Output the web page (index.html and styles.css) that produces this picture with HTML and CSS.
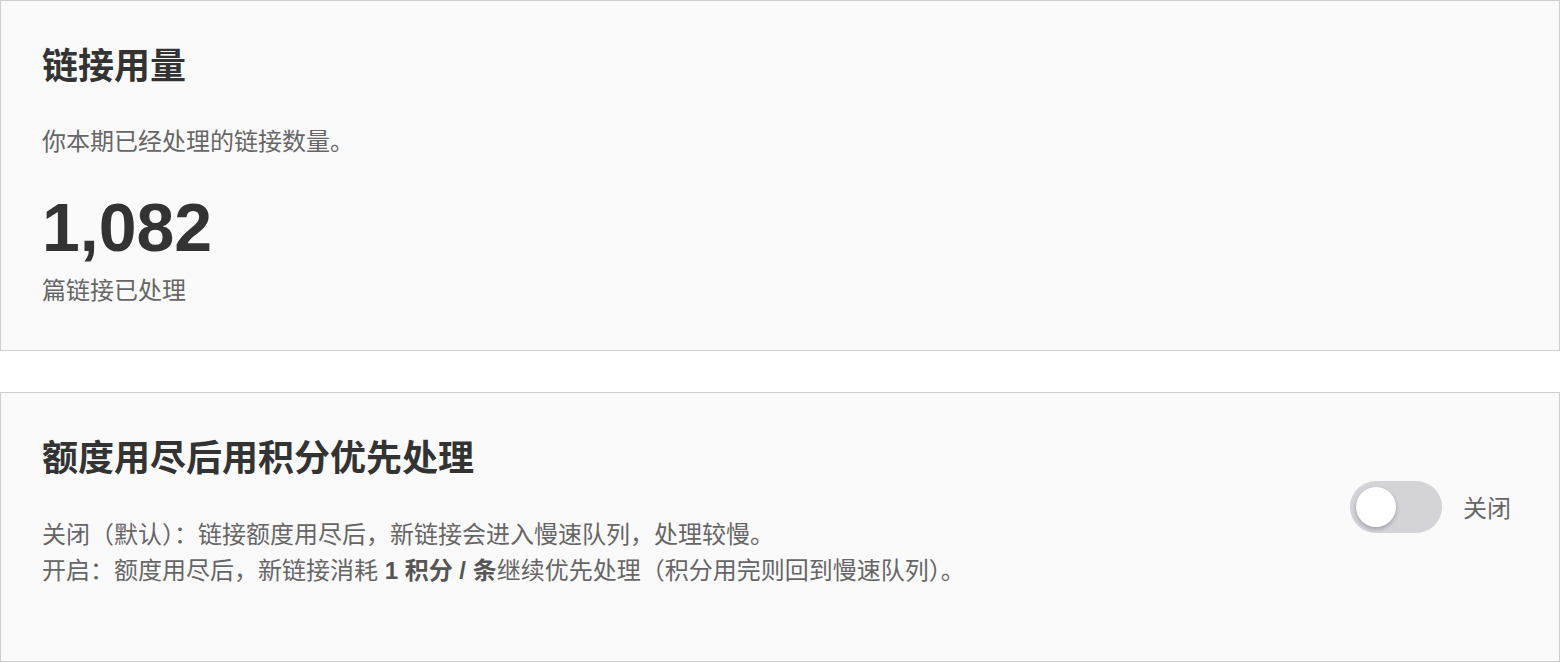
FILE: index.html
```html
<!DOCTYPE html>
<html lang="zh-CN">
<head>
    <meta charset="UTF-8">
    <meta name="viewport" content="width=device-width, initial-scale=1.0">
    <title>链接用量</title>
    <link rel="stylesheet" href="styles.css">
</head>
<body>
    <div class="card">
        <h2 class="card-title">链接用量</h2>
        <p class="card-desc">你本期已经处理的链接数量。</p>
        <div class="usage-number">1,082</div>
        <div class="usage-label">篇链接已处理</div>
    </div>

    <div class="card card-row">
        <div class="card-main">
            <h2 class="card-title">额度用尽后用积分优先处理</h2>
            <p class="card-desc">
                关闭（默认）：链接额度用尽后，新链接会进入慢速队列，处理较慢。<br>
                开启：额度用尽后，新链接消耗 <strong>1 积分 / 条</strong>继续优先处理（积分用完则回到慢速队列）。
            </p>
        </div>
        <label class="switch-wrap">
            <span class="switch">
                <span class="knob"></span>
            </span>
            <span class="switch-text">关闭</span>
        </label>
    </div>
</body>
</html>
```

FILE: styles.css
```css
body {
    font-family: "Liberation Sans", "Noto Sans CJK SC", sans-serif;
    margin: 0;
    padding: 0;
    background-color: #fff;
    color: #333;
}
.card {
    background: #fafafa;
    border: 1px solid #cfcfcf;
    padding: 41px;
    margin-bottom: 41px;
}
.card-title {
    font-size: 36px;
    line-height: 50px;
    font-weight: bold;
    color: #333;
    margin: 0;
}
.card-desc {
    font-size: 24px;
    line-height: 36px;
    color: #666;
    margin: 32px 0 0;
}
.card-desc strong {
    color: #555;
}
.usage-number {
    font-size: 68px;
    line-height: 84px;
    font-weight: bold;
    color: #333;
    margin-top: 25px;
}
.usage-label {
    font-size: 24px;
    line-height: 36px;
    color: #666;
    margin-top: 4px;
}
.card-row {
    display: flex;
    align-items: center;
    justify-content: space-between;
    margin-bottom: 0;
    padding-bottom: 72px;
}
.card-row .card-desc {
    margin-top: 33px;
}
.switch-wrap {
    display: flex;
    align-items: center;
    gap: 21px;
    margin-right: 7px;
    margin-top: -10px;
}
.switch {
    width: 92px;
    height: 52px;
    border-radius: 26px;
    background: #d3d3d8;
    display: flex;
    align-items: center;
    padding: 0 6px;
    box-sizing: border-box;
}
.knob {
    width: 40px;
    height: 40px;
    border-radius: 50%;
    background: #fff;
    box-shadow: 0 2px 4px rgba(0, 0, 0, 0.25);
}
.switch-text {
    font-size: 24px;
    color: #666;
}
```
